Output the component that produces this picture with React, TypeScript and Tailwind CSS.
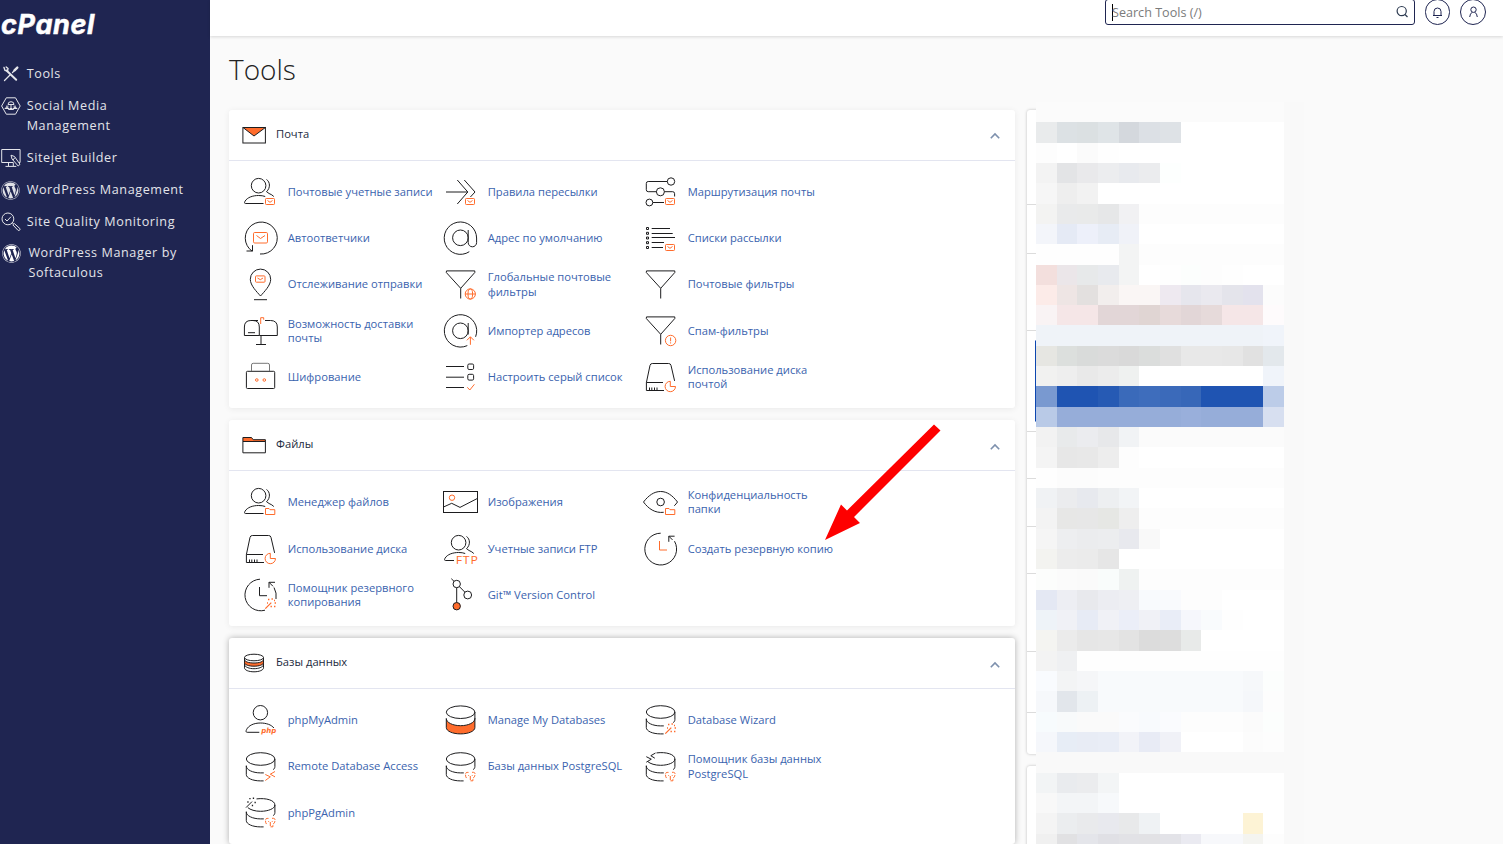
import React, { useState } from 'react';
import { FaWordpress } from 'react-icons/fa';

const INK = '#1d1d1f';
const ORANGE = '#ff6c2c';

/* ---------- badges shown in the corner of a tool icon ---------- */

const MailBadge = () => (
  <g stroke={ORANGE} fill="none">
    <rect x="23.5" y="24.5" width="9" height="6" rx="0.8" />
    <path d="M25.5 26.5l2.5 1.8 2.5-1.8" />
  </g>
);

const FolderBadge = () => (
  <path d="M23.5 30.5v-6h3.5l1 1.2h4.8v4.8z" stroke={ORANGE} fill="none" />
);

const PieBadge = () => (
  <path d="M28.3 22.3a5.2 5.2 0 1 0 5.2 5.2h-5.2z" stroke={ORANGE} fill="none" />
);

const WandBadge = () => (
  <g stroke={ORANGE} fill="none">
    <path d="M23.3 31.7l6-6" strokeWidth="1.2" />
    <path d="M26 22.5h1.4M29.5 22h1.4M32.6 26h1.4M32 29.5h1.4M25 26h1M28.5 29.5h1.4M32 23.5h1" strokeWidth="1.3" />
  </g>
);

const ElephantBadge = () => (
  <g stroke={ORANGE} fill="none">
    <path d="M26.5 23.4h-1.4c-1.2 0-1.6 1-1.6 2.2 0 2 .5 3.4 1.7 4" strokeDasharray="3.5 1" />
    <path d="M28.3 27v4.8h2.6v-2.4M30 23.3h1.4c1.3 0 1.8 1 1.6 2.3-.2 1.8-.8 3-2 3.4" strokeDasharray="4 1" />
    <path d="M26.3 26.5h.8M29.8 26.5h.8" />
  </g>
);

/* ---------- repeated shapes ---------- */

const Person = ({ body = 'M21.5 29.5H3.4c-1.2 0-.9-1.4-.3-2.4C5.3 23.5 10.5 21.5 16.7 21.5c2.5 0 4.7.3 6.5 1' }: { body?: string }) => (
  <>
    <circle cx="16.6" cy="11.7" r="7.3" />
    <path d={body} />
    <path d="M24.5 5.5c3.6 2.4 4.2 8.3 0 12.2l2.6 1.8c2 .8 3.5 1.8 4.7 3" />
  </>
);

const Funnel = () => <path d="M4.5 3.9h28.3v1.6L18.7 21.3 4.3 5.5zM18.7 21.3v10.2" />;

const Cylinder = ({ top = true }: { top?: boolean }) => (
  <>
    {top && <ellipse cx="18.6" cy="10" rx="14.3" ry="6.3" />}
    <path d="M32.9 10v7.5c0 1.3-.6 2.3-1.7 3.2M4.3 17c0 3.8 6.4 6.9 14.3 6.9h3.2M4.3 16.5v9c0 3.7 6.4 6.4 14.3 6.4h3" />
  </>
);

const Drive = () => (
  <>
    <path d="M22 31.5H4.4v-8L8 6.4q.5-1.9 2.3-1.9h16.3q2 0 2.4 1.9l3.6 15.5M4.4 23.5H21" />
    <path d="M7.5 28.5v3M9.8 28.5v3M12.5 28.5v3M15 28.5v3" />
  </>
);

const AtSign = ({ tail }: { tail: string }) => (
  <>
    <circle cx="18.4" cy="17.8" r="7.8" />
    <path d={tail} />
  </>
);

const toolIcons = {
  emailAccounts: <><Person /><MailBadge /></>,
  forwarders: (
    <>
      <path d="M4 18h21.7M15.3 6l10.5 12-10.5 12M22.3 6L33 18l-4.6 5" />
      <MailBadge />
    </>
  ),
  routing: (
    <>
      <circle cx="29" cy="7.5" r="3.7" />
      <circle cx="18.4" cy="17.8" r="4" />
      <circle cx="7.4" cy="28.5" r="3.4" />
      <path d="M25.3 7.5H6.2q-1.9 0-1.9 2v6.2q0 2 1.9 2h8.2M22.4 17.7h8.3q1.9 0 1.9 2v2.8M10.8 28.5H22" />
      <MailBadge />
    </>
  ),
  autoresponders: (
    <>
      <path d="M18 34A16 16 0 1 0 10.3 31.3M4.5 31h6v-5.8" />
      <g stroke={ORANGE}>
        <rect x="11.5" y="12.5" width="14" height="10.5" rx="1.2" />
        <path d="M14.5 15.5l4 3 4.5-3" />
      </g>
    </>
  ),
  defaultAddress: <AtSign tail="M26.2 10v12.6a4.2 4.2 0 0 0 8.4 0V18a16.2 16.2 0 1 0-7.3 13.7" />,
  mailingLists: (
    <>
      <path d="M9.7 8.5H28M9.7 13.5h21M9.7 17.5H33M9.7 22.5H22M9.7 27.5H21" />
      <path d="M4.5 7.5h2v2h-2zM4.5 12.3h2v2h-2zM4.5 17h2v2h-2zM4.5 21.7h2v2h-2zM4.5 26.5h2v2h-2z" />
      <MailBadge />
    </>
  ),
  trackDelivery: (
    <>
      <path d="M18.5 29C15 25 8.3 18.5 8.3 12.3a10.2 10.2 0 0 1 20.4 0C28.7 18.5 22 25 18.5 29zM12 32.7h13" />
      <g stroke={ORANGE}>
        <rect x="13.5" y="8.9" width="9.5" height="6.3" rx="0.8" />
        <path d="M15.5 11l2.8 1.7L21 11" />
      </g>
    </>
  ),
  globalFilters: (
    <>
      <Funnel />
      <g stroke={ORANGE}>
        <circle cx="28.3" cy="27" r="5.1" />
        <ellipse cx="28.3" cy="27" rx="2.3" ry="5.1" />
        <path d="M23.2 27h10.2" />
      </g>
    </>
  ),
  filters: <Funnel />,
  deliverability: (
    <>
      <path d="M2.4 22.5V14q0-6.5 6.5-6.5h2q6.4 0 6.4 6.5v8.5zM10 7.5h6M23 7.5h5.5q6.8 0 6.8 6.5v8.5H17.3M19 22.5v9M14 31.5h10M6 19.7h7" />
      <path d="M18.7 11V4.7h3v2" stroke={ORANGE} />
    </>
  ),
  addressImporter: (
    <>
      <AtSign tail="M26.2 10v11.5M33.6 23.8A16.2 16.2 0 1 0 25.3 32.6" />
      <path d="M28.4 31.8v-8M24.9 27.3l3.5-3.5 3.5 3.5" stroke={ORANGE} />
    </>
  ),
  spamFilters: (
    <>
      <Funnel />
      <g stroke={ORANGE}>
        <circle cx="28.6" cy="27.5" r="5.2" />
        <path d="M28.6 24.5v3.8M28.6 29.3v1.2" />
      </g>
    </>
  ),
  encryption: (
    <>
      <rect x="4.4" y="12.3" width="28.3" height="17.2" rx="1" />
      <path d="M9.5 12V6q0-1.7 1.7-1.7h14.6q1.7 0 1.7 1.7v6" stroke="#777" />
      <g stroke={ORANGE}>
        <circle cx="14.8" cy="21" r="1.3" />
        <circle cx="22.3" cy="21" r="1.3" />
      </g>
    </>
  ),
  greylisting: (
    <>
      <path d="M4 7.5h18M4 18.2h18M4 28.5h18" />
      <rect x="25.8" y="5" width="5.8" height="5.5" rx="1.3" />
      <rect x="25.8" y="15.3" width="5.8" height="5.8" rx="1.3" />
      <path d="M25.3 28.3l2.5 2.7 4.6-5.7" stroke={ORANGE} />
    </>
  ),
  diskUsage: <><Drive /><PieBadge /></>,
  fileManager: <><Person /><FolderBadge /></>,
  images: (
    <>
      <rect x="1.5" y="7.5" width="34" height="21" />
      <path d="M1.5 23l8.2-3.7L18 23.4l17.5-9" />
      <circle cx="10" cy="13.7" r="2.7" stroke={ORANGE} />
    </>
  ),
  privacy: (
    <>
      <path d="M21.7 28.3C13 29.3 6.5 24.8 1.5 18 6.5 11.5 12 7.5 18.6 7.5S30.5 11.5 35.5 18c-1 1.4-2 2.6-3.2 3.8" />
      <circle cx="18.6" cy="18" r="3.8" />
      <FolderBadge />
    </>
  ),
  ftp: (
    <>
      <Person body="M12 29.5H3.4c-1.2 0-.9-1.4-.3-2.4 2.2-3.6 7.4-5.6 13.6-5.6 2.5 0 4.7.3 6.5 1" />
      <text
        x="13.7"
        y="32.6"
        fill={ORANGE}
        stroke="none"
        fontSize="10.5"
        fontFamily="Open Sans, sans-serif"
        letterSpacing="0.7"
        textLength="23"
        lengthAdjust="spacingAndGlyphs"
      >
        FTP
      </text>
    </>
  ),
  backup: (
    <>
      <path d="M18.7 2.2A15.9 15.9 0 1 0 32.5 10.2M32.6 5.2h-5.8v5.6M26.8 5.2l3.7 3.7" />
      <path d="M17.5 10v9H25" stroke={ORANGE} />
    </>
  ),
  backupWizard: (
    <>
      <path d="M18 2.2A15.8 15.8 0 1 0 23 33.2M33 5.3h-6v5.5M27 5.3l4 4M32 10.5q3 5.5 2 11.5M17.5 10v8.7H25" />
      <WandBadge />
    </>
  ),
  git: (
    <>
      <circle cx="14.7" cy="7" r="3.7" />
      <circle cx="25.7" cy="18" r="3.9" />
      <circle cx="14.7" cy="29.2" r="3.7" fill={ORANGE} />
      <path d="M9.3 1.7l2.8 2.7M14.7 10.7v14.8M17.4 9.6l5.5 5.6" />
    </>
  ),
  phpMyAdmin: (
    <>
      <circle cx="18.4" cy="10.7" r="7.2" />
      <path d="M17.3 30.3H5.2c-1.5 0-1.3-1.4-.7-2.6 2-4.3 7.5-6.7 13.9-6.7 6 0 11 1.8 13.5 5" />
      <text
        x="19.3"
        y="30.7"
        fill={ORANGE}
        stroke="none"
        fontSize="7.2"
        fontWeight="700"
        fontStyle="italic"
        fontFamily="DejaVu Sans, sans-serif"
        textLength="15"
        lengthAdjust="spacingAndGlyphs"
      >
        php
      </text>
    </>
  ),
  databases: (
    <>
      <path d="M4.3 16.5c0 4 6.4 7.2 14.3 7.2s14.3-3.2 14.3-7.2v9c0 3.7-6.4 6.4-14.3 6.4S4.3 29.2 4.3 25.5z" fill={ORANGE} />
      <ellipse cx="18.6" cy="10.2" rx="14.3" ry="6.3" />
      <path d="M32.9 10v7" />
    </>
  ),
  databaseWizard: <><Cylinder /><WandBadge /></>,
  remoteAccess: (
    <>
      <Cylinder />
      <path d="M23.3 25.5l5 2.3-5 3.7M33 22.5l-4.7 2.7 4.7 2.7" stroke={ORANGE} />
    </>
  ),
  postgres: <><Cylinder /><ElephantBadge /></>,
  postgresWizard: (
    <>
      <path d="M14.5 3.9c10-1.2 18.4 1.5 18.4 6.1 0 3.5-6.4 6.3-14.3 6.3-5.5 0-10.4-1.5-12.8-3.7" />
      <path d="M4.3 7.7l5 2.5-5 3M13.5 4L8.8 6.7l4 2.5" />
      <Cylinder top={false} />
      <ElephantBadge />
    </>
  ),
  phpPgAdmin: (
    <>
      <path d="M14.5 3.9c10-1.2 18.4 1.5 18.4 6.1 0 3.5-6.4 6.3-14.3 6.3-5.5 0-10.4-1.5-12.8-3.7" />
      <path d="M4 12.6l6-6" />
      <path d="M7.3 3.6h1.3M10.8 3.2h1.3M5.3 7h1.3M12.5 7.5h1.3M9.8 10.5h1.3" strokeWidth="1.4" />
      <Cylinder top={false} />
      <ElephantBadge />
    </>
  ),
};

type Tool = { label: string; icon: keyof typeof toolIcons };

interface Group {
  title: string;
  icon: React.ReactNode;
  tools: Tool[];
  raised?: boolean;
}

const groups: Group[] = [
  {
    title: 'Почта',
    icon: (
      <>
        <rect x="0.9" y="4.5" width="22.5" height="15.5" />
        <path d="M1 4.5h22.4L12 13z" fill={ORANGE} />
      </>
    ),
    tools: [
      { label: 'Почтовые учетные записи', icon: 'emailAccounts' },
      { label: 'Правила пересылки', icon: 'forwarders' },
      { label: 'Маршрутизация почты', icon: 'routing' },
      { label: 'Автоответчики', icon: 'autoresponders' },
      { label: 'Адрес по умолчанию', icon: 'defaultAddress' },
      { label: 'Списки рассылки', icon: 'mailingLists' },
      { label: 'Отслеживание отправки', icon: 'trackDelivery' },
      { label: 'Глобальные почтовые\nфильтры', icon: 'globalFilters' },
      { label: 'Почтовые фильтры', icon: 'filters' },
      { label: 'Возможность доставки\nпочты', icon: 'deliverability' },
      { label: 'Импортер адресов', icon: 'addressImporter' },
      { label: 'Спам-фильтры', icon: 'spamFilters' },
      { label: 'Шифрование', icon: 'encryption' },
      { label: 'Настроить серый список', icon: 'greylisting' },
      { label: 'Использование диска\nпочтой', icon: 'diskUsage' },
    ],
  },
  {
    title: 'Файлы',
    icon: (
      <>
        <path d="M0.9 8.5v-4h8.6l1.7 2.2h12.2v1.8z" fill={ORANGE} />
        <path d="M0.9 8.5h22.5v11.3H0.9z" />
      </>
    ),
    tools: [
      { label: 'Менеджер файлов', icon: 'fileManager' },
      { label: 'Изображения', icon: 'images' },
      { label: 'Конфиденциальность\nпапки', icon: 'privacy' },
      { label: 'Использование диска', icon: 'diskUsage' },
      { label: 'Учетные записи FTP', icon: 'ftp' },
      { label: 'Создать резервную копию', icon: 'backup' },
      { label: 'Помощник резервного\nкопирования', icon: 'backupWizard' },
      { label: 'Git™ Version Control', icon: 'git' },
    ],
  },
  {
    title: 'Базы данных',
    raised: true,
    icon: (
      <>
        <path d="M2.5 6.5v10.3c0 2.3 4.2 4 9.5 4s9.5-1.7 9.5-4V6.5" />
        <path d="M2.5 14c1 2.2 4.7 3.7 9.5 3.7s8.5-1.5 9.5-3.7" />
        <path d="M2.5 8.5c0 2.2 4.2 3.5 9.5 3.5s9.5-1.3 9.5-3.5v3.2c0 2-4.2 3.5-9.5 3.5s-9.5-1.5-9.5-3.5z" fill={ORANGE} />
        <ellipse cx="12" cy="6.5" rx="9.5" ry="3.3" fill="#fff" />
      </>
    ),
    tools: [
      { label: 'phpMyAdmin', icon: 'phpMyAdmin' },
      { label: 'Manage My Databases', icon: 'databases' },
      { label: 'Database Wizard', icon: 'databaseWizard' },
      { label: 'Remote Database Access', icon: 'remoteAccess' },
      { label: 'Базы данных PostgreSQL', icon: 'postgres' },
      { label: 'Помощник базы данных\nPostgreSQL', icon: 'postgresWizard' },
      { label: 'phpPgAdmin', icon: 'phpPgAdmin' },
    ],
  },
];

const navItems = [
  {
    label: 'Tools',
    icon: (
      <svg viewBox="0 0 20 20" className="h-5 w-5" fill="none" stroke="#e4e5ea" strokeLinecap="round">
        <path d="M5.5 6.5l9.7 9.3" strokeWidth="2" />
        <path d="M3 3.5l1 3 2.5.5.5-2.5L5.2 3" strokeWidth="1.4" />
        <path d="M3.5 16.5l6-6M11.5 8.5L14 6" strokeWidth="1.3" />
        <path d="M13.5 6.3L16.3 3.6" strokeWidth="2.4" />
      </svg>
    ),
  },
  {
    label: 'Social Media\nManagement',
    icon: (
      <svg viewBox="0 0 20 20" className="h-5 w-5" fill="none" stroke="#e4e5ea">
        <path d="M5.3 1.8h9.2L19.2 10l-4.7 8.2H5.3L.6 10z" />
        <path d="M7 8.5a3 2.8 0 0 1 6 0zM10 9v3.5M3.8 12.500q2-2.500 4.200 0zM12 12.500q2-2.500 4.200 0zM7.500 13.500q2.500-2.500 5 0z" />
        <path d="M5 10.200h2.500M12.500 10.200H15" />
      </svg>
    ),
  },
  {
    label: 'Sitejet Builder',
    icon: (
      <svg viewBox="0 0 20 20" className="h-5 w-5" fill="none" stroke="#e4e5ea">
        <path d="M12.5 14.5H.7V1.5h18.4v13h-1M7.5 14.5v3.7M12.3 15v3.2M4.5 18.4h10.8" />
        <path d="M10 7.2l3.5 1.3 5.5 7.8-1.8 1.7-6.2-7zM12 12l2-2.5" />
      </svg>
    ),
  },
  { label: 'WordPress Management', icon: <FaWordpress className="mt-px h-[19px] w-[19px] text-[#dfe0e6]" /> },
  {
    label: 'Site Quality Monitoring',
    icon: (
      <svg viewBox="0 0 20 20" className="h-5 w-5" fill="none" stroke="#e4e5ea">
        <circle cx="6.9" cy="6.9" r="5.9" />
        <path d="M4 7l2 2 4-4.3M11.3 10.8l1.2 1.2M11.8 12.8l1.5-1.3 5.5 5q.6 1-.2 1.7-.8.6-1.7 0z" />
      </svg>
    ),
  },
  { label: 'WordPress Manager by\nSoftaculous', icon: <FaWordpress className="ml-px mt-px h-[19px] w-[19px] text-white" />, shifted: true },
];

// pixelated statistics, one row of cell colours per line; the last colour fills the rest of the row
const mosaic = [
  'fbfbfb',
  'e9ebec dce1e4 dbe0e2 dfe4e7 d4d8dd dce0e5 dee2e6 ffffff',
  'fdfdfd ffffff fbfbfb fefefe ffffff',
  'f3f3f3 e3e4e6 e9e9eb ecedef e8eaee ebecee fdfffe ffffff',
  'f6f6f6 eeeeee f2f2f2 ffffff',
  'f3f3f2 e9eaeb e9eaea e6e7e8 f1f1f3 fdfdfd',
  'f3f5fa e5eaf5 edf0fa e7ecf5 f0f2f8 ffffff',
  'fefefe fefefe fefefe fefefe f3f4f4 fdfdfd',
  'f3dfdd ebe6e9 e7e9ea e8eaee f3f4f4 ffffff fefefe fcfefd fdfdfd fefefe ffffff',
  'fcebe8 eee5e4 e3e0df f2eeed faf6f5 faf6f5 eee9f0 e6e6ed eae9ef e4e4eb e3e2ed fcfcfc',
  'f9f3f4 f5e6e7 f5e6e7 e2d6d7 e2d6d7 e0d5d3 e7dada e2d6d7 e6dada f5e6e7 f5e6e7 fefbfc',
  'eff3f8 eff3f8 eff3f8 eff3f8 eff3f8 eff3f8 eff3f8 eff3f8 eff3f8 eff3f8 eff3f8 f0f4fa',
  'e6e6e2 dcdfdd d9dbda dbdbdb d9d9d9 dbdddc e0e0e0 e8e8e8 e8e8e8 e7e7e7 e1e1e1 e3e8ec',
  'f1f1f0 eeeeee e9e9e9 ececec eff1f0 ffffff ffffff ffffff ffffff ffffff ffffff f0f4fa',
  '7999d0 1f54b2 1f54b2 265ab4 3a6aba 3e6dbc 3b6aba 3767b8 1f54b2 1f54b2 1f54b2 bccce8',
  'b9cae7 96add9 96add9 96add9 96add9 96add9 96add9 99afdb 96add9 96add9 96add9 d7dff0',
  'f2f2f2 e8eaeb ebecef e7e8ea f1f3f5 fbfbfb',
  'f4f4f4 e7e7e7 e8e8e8 ededed fdfdfd ffffff',
  'fefefe fcfcfc fcfcfc fdfdfd',
  'f0f2f4 ebecee e7e9ee edeff1 f2f4f6 ffffff',
  'f3f3f3 e7e7e6 e7e7e7 e6e7e4 eeeeee fdfdfd',
  'f5f5f5 edeef0 ebecee ecedef e8e9ee f9f9f9 ffffff',
  'f3f3f0 ececec ebebeb e6e6e6 ffffff',
  'fcfdfc fbfbfb fafafa f9fcfb eff2f1 fdfdfd',
  'e4e8f3 edeef3 e8e9ed ecedf2 eeeff3 f8fafd f9fafd fdfdfd fdfdfd ffffff',
  'eef3f8 f0f1f6 e7ebf5 f0f1f6 ebeef8 f0f1f6 e9edf7 f6f7fc f9fbfd fefefe ffffff',
  'f4f4f1 ebebeb e6e6e6 e7e7e7 e3e3e3 dcdcdc dddddd e8eae9 ffffff',
  'f3f3f3 eff0f2 fefefe',
  'f9fbfe f3f4f5 f5f6f8 f8fafc f8fafc f8fafc f8fafc f8fafc f8fafc f8fafc f6f8fa fcfefd',
  'f6f8fb e2e6eb edf1f4 f8fafc f8fafc f8fafc f8fafc f8fafc f8fafc f8fafc f5f7fa fdfdfd',
  'f7fbfd f8fafb fafafa fafafa fafbfd f8fafd fafbfe fdfdfd fdfdfd fdfdfd fbfbfb fcfefd',
  'f5f7fb e7edf6 e8ecf5 e9edf6 f2f3f8 e8ebf5 f0f1f7 ffffff ffffff ffffff fcfcfc fdfdfd',
  'f9f9f9',
  'f2f4f5 e9ebee ebecee f3f5f6 ffffff',
  'f8f8f8 f3f5f7 f3f5f7 f7f9fb ffffff',
  'f4f4f4 ebedef e9eaec e8e9ee e8e9ea eff2f4 ffffff ffffff ffffff ffffff fdf3d5 ffffff',
  'f0f0f0 e1e1e3 e4e5ea e0e0e5 e2e2e6 e2e2e5 e3e3e8 eaeaf1 f7f8fb f7f8fb f4f4f0 fdfdfd',
].map((row) => {
  const cells = row.split(' ');
  return Array.from({ length: 12 }, (_, i) => cells[Math.min(i, cells.length - 1)]);
});

function Sidebar() {
  return (
    <aside className="w-[210px] shrink-0 bg-[#1f2551] text-[12.6px] leading-5 tracking-[0.6px] text-[#e3e4ea]">
      <div className="h-[62px] pt-1">
        <svg width="104" height="42" viewBox="0 0 104 42" role="img" aria-label="cPanel">
          <text
            x="1"
            y="29.5"
            fill="#fff"
            stroke="#fff"
            strokeWidth="0.5"
            fontFamily="Inter, sans-serif"
            fontSize="26.5"
            fontWeight="700"
            fontStyle="italic"
            textLength="94"
            lengthAdjust="spacingAndGlyphs"
          >
            cPanel
          </text>
        </svg>
      </div>
      <nav>
        {navItems.map((item) => (
          <a key={item.label} href="#" className={`flex items-start pb-[10px] ${item.shifted ? '-mt-px' : ''}`}>
            <span className="ml-px mt-0.5 h-[18px] w-[25.7px] shrink-0">{item.icon}</span>
            <span className={`whitespace-pre-line pt-0.5 ${item.shifted ? 'pl-[1.7px]' : ''}`}>{item.label}</span>
          </a>
        ))}
      </nav>
    </aside>
  );
}

function TopBar() {
  return (
    <header className="z-10 flex h-9 shrink-0 items-start justify-end bg-white pr-[17px] shadow-[0_1px_3px_rgba(0,0,0,0.14)]">
      <div className="-mt-px mr-2.5 flex h-[26px] w-[310px] items-center rounded-[3px] border-[1.5px] border-[#1f2551] pl-1.5 pr-[5px]">
        <span className="h-[17px] w-px bg-black" />
        <span className="-ml-px flex-1 pt-px text-[12.6px] leading-[15px] text-[#7b7b7b]">Search Tools (/)</span>
        <svg width="14" height="14" viewBox="0 0 14 14" fill="none" stroke="#2c3a50" strokeWidth="1.2">
          <circle cx="6.7" cy="6.1" r="4.6" />
          <path d="M10 9.5l2.5 2.5" />
        </svg>
      </div>
      <button className="-mt-px mr-2.5 flex h-[26px] w-[25px] items-center justify-center rounded-full border border-[#1f2551]">
        <svg width="13" height="13" viewBox="0 0 13 13" fill="none" stroke="#1f2551">
          <path d="M2 9.5h9M3 9.5V5.5a3.5 3.5 0 0 1 7 0v4M5.500 11.500h2" />
        </svg>
      </button>
      <button className="-mt-px flex h-[26px] w-[26px] items-center justify-center rounded-full border border-[#1f2551]">
        <svg width="13" height="13" viewBox="0 0 13 13" fill="none" stroke="#1f2551">
          <circle cx="6.5" cy="3.7" r="2.7" />
          <path d="M2.7 11q.3-3.3 2.5-4.8M10.3 11q-.3-3.3-2.5-4.8" />
        </svg>
      </button>
    </header>
  );
}

function ToolGroup({ group }: { group: Group }) {
  const [open, setOpen] = useState(true);

  return (
    <section
      className={`w-[786px] rounded-[3px] bg-white ${
        group.raised ? 'shadow-[0_0_6px_rgba(0,0,0,0.3)]' : 'shadow-[0_1px_6px_rgba(0,0,0,0.07)]'
      }`}
    >
      <button
        onClick={() => setOpen(!open)}
        className="flex h-[50.8px] w-full items-center border-b border-[#e3e5f0] pl-[13px] pr-[14px] text-left text-[11.2px] text-[#1c2a3e]"
      >
        <svg width="24" height="24" viewBox="0 0 24 24" fill="none" stroke={INK} className="mr-2.5">
          {group.icon}
        </svg>
        <span className="flex-1 pb-px">{group.title}</span>
        <svg width="12" height="12" viewBox="0 0 12 12" fill="none" stroke="#7d90ad" strokeWidth="1.6" className="mt-[3px]">
          <path d={open ? 'M1.8 8.3L6 4l4.2 4.3' : 'M1.8 4L6 8.3 10.2 4'} />
        </svg>
      </button>
      {open && (
        <div className="grid grid-cols-[200px_200px_200px] auto-rows-[46.33px] px-[13px] py-2">
          {group.tools.map((tool) => (
            <a key={tool.label} href="#" className="flex items-center gap-[9.7px]">
              <svg width="36" height="36" viewBox="0 0 36 36" fill="none" stroke={INK} className="shrink-0 overflow-visible">
                {toolIcons[tool.icon]}
              </svg>
              <span className="whitespace-pre text-[11.2px] leading-[14.3px] text-[#3a63ae]">{tool.label}</span>
            </a>
          ))}
        </div>
      )}
    </section>
  );
}

function Statistics() {
  return (
    <aside className="relative w-[258px] shrink-0">
      <div className="mb-3 overflow-hidden rounded-[3px] bg-white shadow-[0_0_3px_rgba(0,0,0,0.25)]">
        <div className="h-[95px] border-b border-[#dcdcdc]" />
        <div className="h-[49px] border-b border-[#dcdcdc]" />
        <div className="h-[77px] border-b border-[#dcdcdc]" />
        <div className="h-[101px] border-b border-[#dcdcdc] px-2 py-[9px]">
          <div className="h-full rounded-[1px] border border-[#0d47b0]" />
        </div>
        <div className="h-[47px] border-b border-[#dcdcdc]" />
        <div className="h-[48px] border-b border-[#dcdcdc]" />
        <div className="h-[47px] border-b border-[#dcdcdc]" />
        <div className="h-[78px] border-b border-[#dcdcdc]" />
        <div className="h-[61px] border-b border-[#dcdcdc]" />
        <div className="h-[41px]" />
      </div>
      <div className="h-[120px] rounded-[3px] bg-white shadow-[0_0_3px_rgba(0,0,0,0.25)]" />
      <div className="absolute -top-[8.125px] left-[9px] flex">
        <div className="grid grid-cols-[repeat(12,20.66px)] auto-rows-[20.329px]">
          {mosaic.flat().map((color, i) => (
            <div key={i} style={{ backgroundColor: `#${color}` }} />
          ))}
        </div>
        <div className="w-5 bg-[#f9f9f9]" />
      </div>
    </aside>
  );
}

export default function App() {
  return (
    <div className="flex h-[844px] w-[1503px] overflow-hidden bg-[#fafafa] font-['Open_Sans','Noto_Sans',sans-serif]">
      <Sidebar />
      <div className="flex min-w-0 flex-1 flex-col">
        <TopBar />
        <main className="relative min-h-0 flex-1 overflow-hidden pl-[19px]">
          <h1 className="h-[74px] pt-[13px] text-[28px] font-light leading-10 text-[#222]">Tools</h1>
          <div className="flex gap-3">
            <div className="flex flex-col gap-3">
              {groups.map((group) => (
                <ToolGroup key={group.title} group={group} />
              ))}
            </div>
            <Statistics />
          </div>
          {/* Pointer to the backup tool */}
          <svg width="118" height="118" viewBox="0 0 118 118" className="pointer-events-none absolute left-[614px] top-[387px]">
            <path d="M1 117L17 81.5l6 6L110 1.5l6.5 6L30 94l6 6z" fill="#fe0000" />
          </svg>
        </main>
      </div>
    </div>
  );
}
